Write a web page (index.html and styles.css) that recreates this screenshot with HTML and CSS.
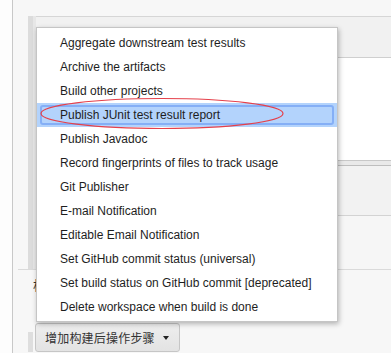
FILE: index.html
```html
<!DOCTYPE html>
<html>
<head>
<meta charset="utf-8">
<link rel="stylesheet" href="styles.css">
</head>
<body>
<div class="page">
  <div class="side-strip"></div>
  <div class="main">
    <div class="section">
      <div class="sec-inner">
        <div class="sec-head"></div>
        <div class="sec-body"></div>
        <div class="sec-band"></div>
        <div class="sec-gray"></div>
        <div class="sec-foot"></div>
      </div>
    </div>
    <div class="divider"></div>
    <div class="label"><span class="label-text">构建后操作</span></div>
    <div class="btn-row">
      <div class="btn-bar"></div>
      <div class="btn">增加构建后操作步骤<span class="caret"></span></div>
    </div>
  </div>
</div>

<div class="menu">
  <div class="item">Aggregate downstream test results</div>
  <div class="item">Archive the artifacts</div>
  <div class="item">Build other projects</div>
  <div class="item active"><div class="active-inner">Publish JUnit test result report</div></div>
  <div class="item">Publish Javadoc</div>
  <div class="item">Record fingerprints of files to track usage</div>
  <div class="item">Git Publisher</div>
  <div class="item">E-mail Notification</div>
  <div class="item">Editable Email Notification</div>
  <div class="item">Set GitHub commit status (universal)</div>
  <div class="item">Set build status on GitHub commit [deprecated]</div>
  <div class="item">Delete workspace when build is done</div>
</div>

<svg class="annot" width="250" height="34" viewBox="0 0 250 34">
  <ellipse cx="122" cy="16.5" rx="121" ry="15" fill="none" stroke="#e5414b" stroke-width="1.2"/>
</svg>
</body>
</html>
```

FILE: styles.css
```css
html, body {
  margin: 0;
  padding: 0;
}
body {
  width: 391px;
  height: 353px;
  overflow: hidden;
  font-family: "Liberation Sans", Arial, sans-serif;
  position: relative;
  background: #f7f7f7;
}
.page {
  display: flex;
  height: 353px;
  overflow: hidden;
}
.side-strip {
  width: 12px;
  background: #fdfdfd;
  border-right: 1px solid #c8c8c8;
}
.main {
  flex: 1;
  background: #f7f7f7;
  padding-top: 16px;
}
.section {
  margin-left: 15px;
  border-left: 5px solid #dcdcdc;
}
.sec-inner {
  border-left: 3px solid #e7e7e7;
}
.sec-head {
  height: 40px;
  border-top: 1px solid #d6d6d6;
  border-bottom: 1px solid #cfcfcf;
  background: #f1f1f1;
}
.sec-body {
  height: 102px;
  background: #ffffff;
  border-bottom: 1px solid #c8c8c8;
}
.sec-band {
  height: 4px;
  background: #e9e9e9;
  border-bottom: 1px solid #bebebe;
}
.sec-gray {
  height: 49px;
  background: #f2f2f2;
  border-bottom: 1px solid #d3d3d3;
}
.sec-foot {
  height: 53px;
  background: #f6f6f6;
}
.divider {
  margin-left: 5px;
  height: 1px;
  background: #dadada;
}
.label {
  margin-left: 20px;
  margin-top: 6px;
  width: 3px;
  height: 18px;
  overflow: hidden;
  font-size: 13px;
  line-height: 18px;
  color: #333;
  font-family: "Noto Sans CJK SC", sans-serif;
  white-space: nowrap;
}
.btn-row {
  display: flex;
  align-items: flex-start;
  margin-top: 29px;
  margin-left: 15px;
}
.btn-bar {
  width: 5px;
  height: 20px;
  margin-top: 9px;
  background: #dedede;
}
.btn {
  margin-left: 2px;
  box-sizing: border-box;
  width: 145px;
  height: 29px;
  border: 1px solid #c6c6c6;
  border-radius: 3px;
  background: linear-gradient(#eeeeee, #e3e3e3);
  display: flex;
  align-items: center;
  padding-left: 9px;
  font-family: "Noto Sans CJK SC", sans-serif;
  font-size: 12px;
  letter-spacing: 0.2px;
  color: #333;
  white-space: nowrap;
}
.caret {
  display: inline-block;
  margin-left: 8px;
  width: 0;
  height: 0;
  border-left: 3px solid transparent;
  border-right: 3px solid transparent;
  border-top: 4px solid #222;
}
.menu {
  position: absolute;
  left: 36px;
  top: 27px;
  width: 300px;
  background: #ffffff;
  border: 1px solid #c5c5c5;
  box-shadow: 1px 2px 5px rgba(0, 0, 0, 0.28);
  padding: 3px 0 2px 0;
}
.item {
  height: 24px;
  line-height: 24px;
  padding-left: 23px;
  font-size: 12px;
  color: #1e1e1e;
  white-space: nowrap;
}
.item.active {
  background: #b3d3fc;
  padding: 2px 3px;
  box-sizing: border-box;
}
.active-inner {
  box-sizing: border-box;
  height: 20px;
  line-height: 16px;
  border: 2px solid #85aff6;
  border-radius: 3px;
  padding-left: 18px;
}
.annot {
  position: absolute;
  left: 40px;
  top: 97px;
}
```
